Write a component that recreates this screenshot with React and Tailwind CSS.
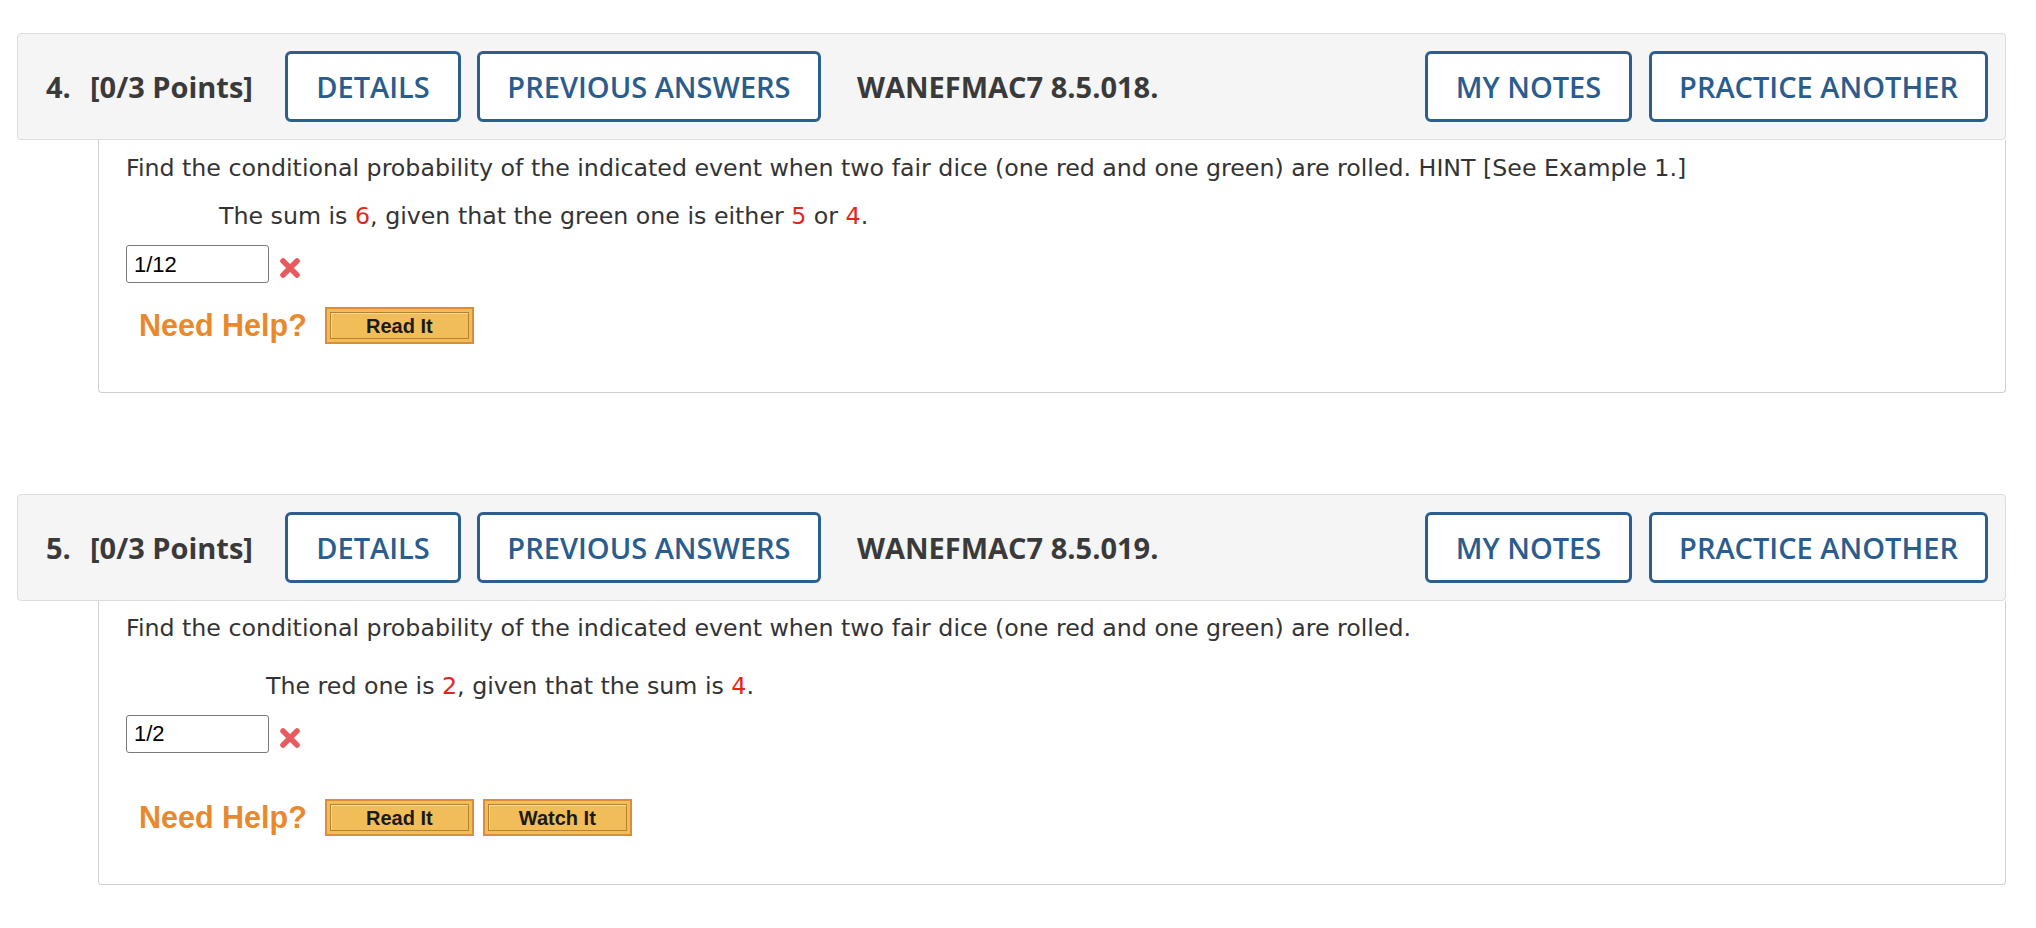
import React from "react";

const HeaderButton = ({ label, width }) => (
  <button
    className={`h-[71px] ${width} rounded-[6px] border-[3px] border-[#2c5f91] bg-white text-[29px] font-semibold text-[#2a5d8f]`}
    style={{ fontFamily: '"Open Sans", sans-serif' }}
  >
    {label}
  </button>
);

const HelpButton = ({ label }) => (
  <div className="h-[37px] w-[149px] border-2 border-[#db8d37] bg-[#f1bd58] p-[3px]">
    <div className="flex h-full w-full items-center justify-center border border-[#b9812f] text-[20px] font-bold text-[#1a1a1a] shadow-[inset_1px_1px_0_#f9dd9a]">
      {label}
    </div>
  </div>
);

const Red = ({ children }) => <span className="text-[#e3261b]">{children}</span>;

const Question = ({ num, code, line2, indent, value, buttons, gaps }) => (
  <div>
    <div
      className="flex h-[107px] items-center rounded-[4px] border border-[#dddddd] bg-[#f5f5f5] pl-[28px] pr-[17px] text-[#3a3a3a]"
      style={{ fontFamily: '"Open Sans", sans-serif' }}
    >
      <span className="w-[44px] text-[29px] font-bold">{num}.</span>
      <span className="text-[29px] font-bold">[0/3 Points]</span>
      <div className="ml-[32px] flex gap-[16px]">
        <HeaderButton label="DETAILS" width="w-[176px]" />
        <HeaderButton label="PREVIOUS ANSWERS" width="w-[344px]" />
      </div>
      <span className="ml-[36px] text-[29px] font-bold">WANEFMAC7 {code}.</span>
      <div className="ml-auto flex gap-[17px]">
        <HeaderButton label="MY NOTES" width="w-[207px]" />
        <HeaderButton label="PRACTICE ANOTHER" width="w-[339px]" />
      </div>
    </div>
    <div
      className={`ml-[81px] rounded-b-[4px] border-x border-b border-[#d0d0d0] pl-[27px] text-[23.7px] text-[#333333] ${gaps.bottom}`}
      style={{ fontFamily: '"DejaVu Sans", Verdana, sans-serif' }}
    >
      <p className={`leading-[30px] ${gaps.top}`}>
        Find the conditional probability of the indicated event when two fair dice (one red and one green) are rolled.
        {num === 4 ? " HINT [See Example 1.]" : ""}
      </p>
      <p className={`leading-[30px] ${gaps.line2} ${indent}`}>{line2}</p>
      <div className={`flex items-center gap-[9px] ${gaps.input}`}>
        <div
          className="flex h-[38px] w-[143px] items-center rounded-[3px] border border-[#7a7a7a] pl-[7px] text-[22px] text-black"
          style={{ fontFamily: '"Liberation Sans", Arial, sans-serif' }}
        >
          {value}
        </div>
        <svg width="24" height="22" viewBox="0 0 24 22" className="mt-[8px]">
          <path d="M5 4 L19 18 M19 4 L5 18" stroke="#e85a5e" strokeWidth="5.5" strokeLinecap="round" />
        </svg>
      </div>
      <div
        className={`flex items-center ${gaps.help}`}
        style={{ fontFamily: '"Liberation Sans", Arial, sans-serif' }}
      >
        <span className="ml-[13px] text-[30.5px] font-bold text-[#e8892e]">Need Help?</span>
        <div className="ml-[18px] flex gap-[9px]">
          {buttons.map((b) => (
            <HelpButton key={b} label={b} />
          ))}
        </div>
      </div>
    </div>
  </div>
);

export default function App() {
  return (
    <div className="min-h-screen w-full bg-white pb-[46px] pl-[17px] pr-[30px] pt-[33px]">
      <Question
        num={4}
        code="8.5.018"
        indent="pl-[93px]"
        value="1/12"
        buttons={["Read It"]}
        gaps={{ top: "pt-[13px]", line2: "mt-[18px]", input: "mt-[14px]", help: "mt-[20px]", bottom: "pb-[43px]" }}
        line2={
          <>
            The sum is <Red>6</Red>, given that the green one is either <Red>5</Red> or <Red>4</Red>.
          </>
        }
      />
      <div className="mt-[101px]">
        <Question
          num={5}
          code="8.5.019"
          indent="pl-[140px]"
          value="1/2"
          buttons={["Read It", "Watch It"]}
          gaps={{ top: "pt-[12px]", line2: "mt-[28px]", input: "mt-[14px]", help: "mt-[42px]", bottom: "pb-[43px]" }}
          line2={
            <>
              The red one is <Red>2</Red>, given that the sum is <Red>4</Red>.
            </>
          }
        />
      </div>
    </div>
  );
}
